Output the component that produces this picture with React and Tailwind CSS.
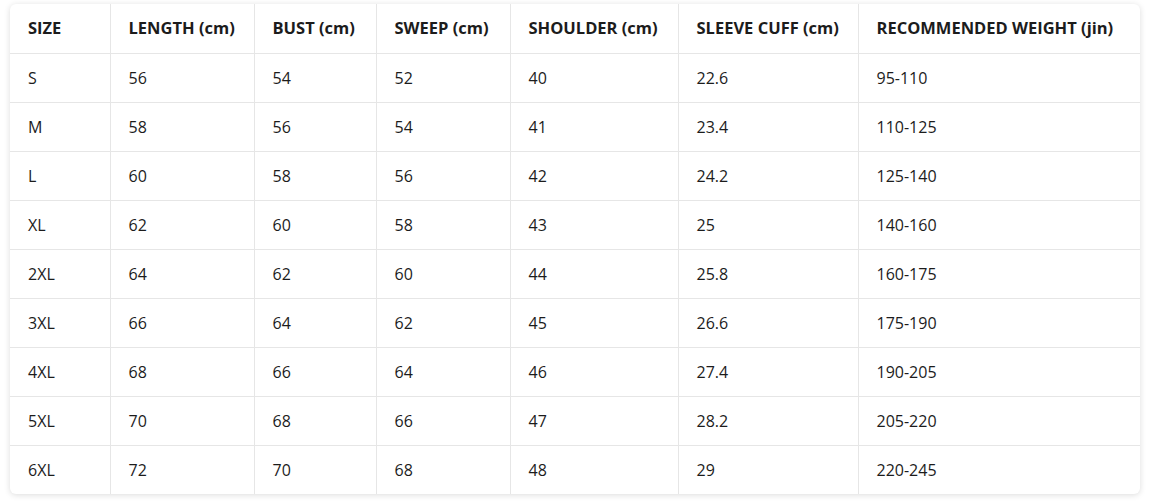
import React from 'react';

const HEAD = [
  ['SIZE', 'w-[100px]'],
  ['LENGTH (cm)', 'w-[144px]'],
  ['BUST (cm)', 'w-[122px]'],
  ['SWEEP (cm)', 'w-[134px]'],
  ['SHOULDER (cm)', 'w-[168px]'],
  ['SLEEVE CUFF (cm)', 'w-[180px]'],
  ['RECOMMENDED WEIGHT (jin)', ''],
];

const ROWS = [
  ['S', '56', '54', '52', '40', '22.6', '95-110'],
  ['M', '58', '56', '54', '41', '23.4', '110-125'],
  ['L', '60', '58', '56', '42', '24.2', '125-140'],
  ['XL', '62', '60', '58', '43', '25', '140-160'],
  ['2XL', '64', '62', '60', '44', '25.8', '160-175'],
  ['3XL', '66', '64', '62', '45', '26.6', '175-190'],
  ['4XL', '68', '66', '64', '46', '27.4', '190-205'],
  ['5XL', '70', '68', '66', '47', '28.2', '205-220'],
  ['6XL', '72', '70', '68', '48', '29', '220-245'],
];

export default function App() {
  return (
    <div className="min-h-screen bg-white pt-[4px] pl-[10px] font-['Open_Sans',sans-serif] text-[#1c1c1c]">
      <div className="w-[1130px] overflow-hidden rounded-md bg-white shadow-[0_1px_6px_rgba(0,0,0,0.14)]">
        <table className="w-full table-fixed border-collapse text-[16px]">
          <thead>
            <tr className="h-[49px]">
              {HEAD.map(([label, w], i) => (
                <th
                  key={label}
                  className={`${w} whitespace-nowrap border-[#e6e6e6] pl-[18px] text-left text-[16.5px] font-bold ${i > 0 ? 'border-l' : ''}`}
                >
                  {label}
                </th>
              ))}
            </tr>
          </thead>
          <tbody>
            {ROWS.map((row) => (
              <tr key={row[0]} className="h-[49px] border-t border-[#e6e6e6]">
                {row.map((val, i) => (
                  <td
                    key={i}
                    className={`border-[#e6e6e6] pl-[18px] ${i > 0 ? 'border-l' : ''}`}
                  >
                    {val}
                  </td>
                ))}
              </tr>
            ))}
          </tbody>
        </table>
      </div>
    </div>
  );
}
